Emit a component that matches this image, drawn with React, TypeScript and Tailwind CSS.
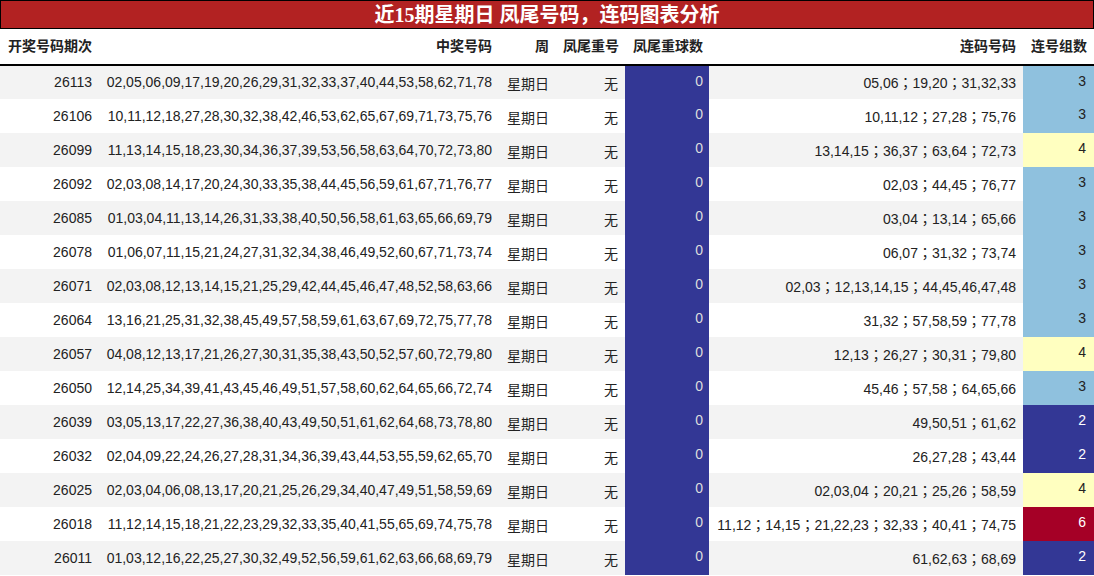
const rows: [string, string, string, number][] = [
["26113","02,05,06,09,17,19,20,26,29,31,32,33,37,40,44,53,58,62,71,78","05,06；19,20；31,32,33",3],
["26106","10,11,12,18,27,28,30,32,38,42,46,53,62,65,67,69,71,73,75,76","10,11,12；27,28；75,76",3],
["26099","11,13,14,15,18,23,30,34,36,37,39,53,56,58,63,64,70,72,73,80","13,14,15；36,37；63,64；72,73",4],
["26092","02,03,08,14,17,20,24,30,33,35,38,44,45,56,59,61,67,71,76,77","02,03；44,45；76,77",3],
["26085","01,03,04,11,13,14,26,31,33,38,40,50,56,58,61,63,65,66,69,79","03,04；13,14；65,66",3],
["26078","01,06,07,11,15,21,24,27,31,32,34,38,46,49,52,60,67,71,73,74","06,07；31,32；73,74",3],
["26071","02,03,08,12,13,14,15,21,25,29,42,44,45,46,47,48,52,58,63,66","02,03；12,13,14,15；44,45,46,47,48",3],
["26064","13,16,21,25,31,32,38,45,49,57,58,59,61,63,67,69,72,75,77,78","31,32；57,58,59；77,78",3],
["26057","04,08,12,13,17,21,26,27,30,31,35,38,43,50,52,57,60,72,79,80","12,13；26,27；30,31；79,80",4],
["26050","12,14,25,34,39,41,43,45,46,49,51,57,58,60,62,64,65,66,72,74","45,46；57,58；64,65,66",3],
["26039","03,05,13,17,22,27,36,38,40,43,49,50,51,61,62,64,68,73,78,80","49,50,51；61,62",2],
["26032","02,04,09,22,24,26,27,28,31,34,36,39,43,44,53,55,59,62,65,70","26,27,28；43,44",2],
["26025","02,03,04,06,08,13,17,20,21,25,26,29,34,40,47,49,51,58,59,69","02,03,04；20,21；25,26；58,59",4],
["26018","11,12,14,15,18,21,22,23,29,32,33,35,40,41,55,65,69,74,75,78","11,12；14,15；21,22,23；32,33；40,41；74,75",6],
["26011","01,03,12,16,22,25,27,30,32,49,52,56,59,61,62,63,66,68,69,79","61,62,63；68,69",2],
];
const cnt = (n: number) =>
  n === 2 ? "bg-[#333795] text-white" : n === 3 ? "bg-[#8fc1de] text-[#222]" : n === 4 ? "bg-[#ffffc0] text-[#222]" : "bg-[#a50026] text-white";
export default function App() {
  return (
    <div className="w-[1094px] h-[576px] overflow-hidden bg-white text-[14px] text-[#222]" style={{ fontFamily: '"Liberation Sans","Noto Sans CJK SC",sans-serif' }}>
      <div className="h-[29px] bg-[#b22222] border border-black flex items-center justify-center text-white text-[20px] font-bold" style={{ fontFamily: '"Liberation Serif","Noto Sans CJK SC",serif' }}>
        近15期星期日 凤尾号码，连码图表分析
      </div>
      <table className="border-collapse table-fixed w-[1094px]">
        <colgroup>
          <col className="w-[100px]" /><col className="w-[398px]" /><col className="w-[57px]" /><col className="w-[70px]" /><col className="w-[84px]" /><col className="w-[314px]" /><col className="w-[71px]" />
        </colgroup>
        <thead>
          <tr className="h-[36px] border-b-2 border-black font-bold text-[14px]">
            <th className="text-left pl-[8px]">开奖号码期次</th>
            <th className="text-right pr-[6px]">中奖号码</th>
            <th className="text-right pr-[6px]">周</th>
            <th className="text-right pr-[6px]">凤尾重号</th>
            <th className="text-right pr-[6px]">凤尾重球数</th>
            <th className="text-right pr-[7px]">连码号码</th>
            <th className="text-right pr-[7px]">连号组数</th>
          </tr>
        </thead>
        <tbody>
          {rows.map((r, i) => (
            <tr key={r[0]} className={`h-[34px] ${i % 2 === 0 ? "bg-[#f3f3f3]" : "bg-white"}`}>
              <td className="text-right pr-[8px]">{r[0]}</td>
              <td className="text-right pr-[6px] whitespace-nowrap">{r[1]}</td>
              <td className="text-right pr-[6px] pt-[4px]">星期日</td>
              <td className="text-right pr-[7px] pt-[4px]">无</td>
              <td className="text-right pr-[6px] align-top pt-[5px] bg-[#333795] text-[#ddd]">0</td>
              <td className="text-right pr-[7px] whitespace-nowrap pt-[2px]" style={{ fontFamily: '"Liberation Sans","Noto Sans CJK TC",sans-serif' }}>{r[2]}</td>
              <td className={`text-right pr-[8px] align-top pt-[5px] ${cnt(r[3])}`}>{r[3]}</td>
            </tr>
          ))}
        </tbody>
      </table>
    </div>
  );
}
